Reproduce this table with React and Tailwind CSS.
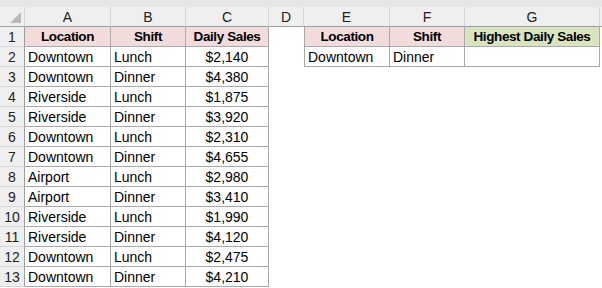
import React from "react";

const cols = ["A", "B", "C", "D", "E", "F", "G"];

const sales = [
  ["Downtown", "Lunch", "$2,140"],
  ["Downtown", "Dinner", "$4,380"],
  ["Riverside", "Lunch", "$1,875"],
  ["Riverside", "Dinner", "$3,920"],
  ["Downtown", "Lunch", "$2,310"],
  ["Downtown", "Dinner", "$4,655"],
  ["Airport", "Lunch", "$2,980"],
  ["Airport", "Dinner", "$3,410"],
  ["Riverside", "Lunch", "$1,990"],
  ["Riverside", "Dinner", "$4,120"],
  ["Downtown", "Lunch", "$2,475"],
  ["Downtown", "Dinner", "$4,210"],
];

const tbl = "border-r border-b border-[#a9a9a9]";
const bold = "justify-center font-bold text-[13.5px] tracking-[-0.4px]";

function Cell({ children, className = "" }) {
  return (
    <div className={`h-5 flex items-center pt-[2px] overflow-hidden whitespace-nowrap ${className}`}>{children}</div>
  );
}

function HeadCell({ children, bg, className = "" }) {
  return <Cell className={`${tbl} ${bg} ${bold} ${className}`}>{children}</Cell>;
}

function RowNum({ n }) {
  return (
    <Cell className="justify-center bg-[#efefef] border-r border-r-[#9e9e9e] border-b border-b-[#d6d6d6] text-[#222]">
      {n}
    </Cell>
  );
}

export default function App() {
  return (
    <div
      className="w-[602px] h-[288px] overflow-hidden bg-white text-[14px] text-black"
      style={{ fontFamily: '"Liberation Sans", Arial, sans-serif' }}
    >
      <div className="h-[7px] bg-[#e6e6e6]" />
      <div className="grid grid-cols-[25px_86px_75px_83px_35px_86px_75px_135px_1fr]">
        {/* column headers */}
        <div className="h-5 bg-[#efefef] border-r border-r-[#d4d4d4] border-b border-b-[#9e9e9e] relative">
          <svg className="absolute right-[3px] bottom-[3px]" width="11" height="11" viewBox="0 0 11 11">
            <polygon points="11,0 11,11 0,11" fill="#b8b8b8" />
          </svg>
        </div>
        {cols.map((c) => (
          <Cell
            key={c}
            className="justify-center bg-[#efefef] border-r border-r-[#d4d4d4] border-b border-b-[#9e9e9e] text-[#222]"
          >
            {c}
          </Cell>
        ))}
        <div className="h-5 bg-[#efefef] border-b border-b-[#9e9e9e]" />

        {/* row 1 */}
        <RowNum n={1} />
        <HeadCell bg="bg-[#f2dcdb]">Location</HeadCell>
        <HeadCell bg="bg-[#f2dcdb]">Shift</HeadCell>
        <HeadCell bg="bg-[#f2dcdb]">Daily Sales</HeadCell>
        <Cell />
        <HeadCell bg="bg-[#f2dcdb]" className="border-l">
          Location
        </HeadCell>
        <HeadCell bg="bg-[#f2dcdb]">Shift</HeadCell>
        <HeadCell bg="bg-[#d8e4bc]">Highest Daily Sales</HeadCell>
        <Cell />

        {sales.map(([loc, shift, amt], i) => (
          <React.Fragment key={i}>
            <RowNum n={i + 2} />
            <Cell className={`${tbl} pl-[3px]`}>{loc}</Cell>
            <Cell className={`${tbl} pl-[3px]`}>{shift}</Cell>
            <Cell className={`${tbl} justify-center`}>{amt}</Cell>
            <Cell />
            {i === 0 ? (
              <>
                <Cell className={`${tbl} border-l pl-[3px]`}>Downtown</Cell>
                <Cell className={`${tbl} pl-[3px]`}>Dinner</Cell>
                <Cell className={tbl} />
              </>
            ) : (
              <>
                <Cell />
                <Cell />
                <Cell />
              </>
            )}
            <Cell />
          </React.Fragment>
        ))}
      </div>
    </div>
  );
}
